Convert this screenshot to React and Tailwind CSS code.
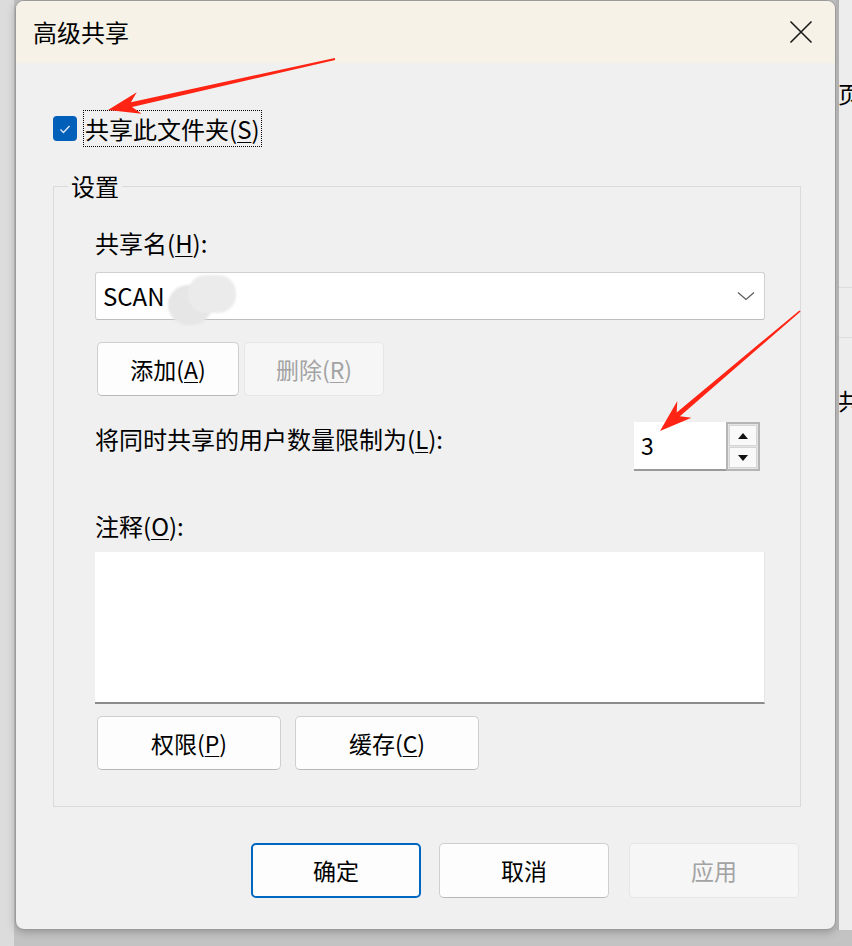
import React from 'react';

const font = "font-['Noto_Sans_CJK_SC','Noto_Sans',sans-serif]";

const Mn = ({ children }) => <span className="underline underline-offset-[3px] decoration-1">{children}</span>;

const Btn = ({ children, w, disabled, primary, className = '' }) => (
  <button
    className={`${w} flex items-center justify-center rounded-[5px] text-[23px] leading-none ${
      primary
        ? 'border-2 border-[#0067c0] bg-[#fdfdfd] text-black'
        : disabled
        ? 'border border-[#e6e6e6] bg-[#f6f6f6] text-[#a3a3a3]'
        : 'border border-[#cfcfcf] border-b-[#b8b8b8] bg-[#fdfdfd] text-black'
    } ${className}`}
  >
    {children}
  </button>
);

const Arrows = () => (
  <svg className="absolute inset-0 pointer-events-none" width="852" height="946" viewBox="0 0 852 946">
    <polygon
      fill="#ff2414"
      points="334.8,58 130.9,102.3 136.8,92.3 108,110 141.6,113.7 132,107.1 335.2,60"
    />
    <polygon
      fill="#ff2414"
      points="799.4,310.4 676.7,412.5 677.3,400.9 660,431 691.5,417.7 679.9,416.3 800.6,311.6"
    />
  </svg>
);

export default function App() {
  return (
    <div className={`${font} relative w-[852px] h-[946px] overflow-hidden bg-[#c3c3c3] flex text-black`}>
      {/* left background strip */}
      <div className="w-[15px] h-full bg-[#dcdcdc] border-r border-[#c4c4c4]" />

      {/* dialog */}
      <div className="w-[821px] h-[930px] flex flex-col bg-[#f0f0f0] border border-[#9a9a9a] rounded-[9px] overflow-hidden shadow-[0_2px_8px_rgba(0,0,0,0.25)]">
        <div className="h-[62px] shrink-0 bg-[#f7f2e7] flex items-center justify-between pl-[17px] pr-[22px]">
          <span className="text-[24px] leading-none">高级共享</span>
          <svg width="24" height="24" viewBox="0 0 24 24">
            <path d="M1.5 1.5 L22.5 22.5 M22.5 1.5 L1.5 22.5" stroke="#1a1a1a" strokeWidth="1.6" fill="none" />
          </svg>
        </div>

        <div className="flex-1 flex flex-col">
          {/* share checkbox */}
          <div className="flex items-center pl-[37px] pt-[47px]">
            <div className="w-[24px] h-[25px] rounded-[4px] bg-[#005fb8] flex items-center justify-center">
              <svg width="16" height="16" viewBox="0 0 16 16">
                <path d="M3.5 8.5 L6.5 11.5 L12.5 5" stroke="#dce9f7" strokeWidth="1.4" fill="none" />
              </svg>
            </div>
            <div className="ml-[6px] h-[37px] px-[1px] flex items-center border border-dotted border-black text-[24px] leading-none">
              共享此文件夹(<Mn>S</Mn>)
            </div>
          </div>

          {/* settings group */}
          <div className="relative ml-[37px] mt-[39px] w-[748px] h-[621px] border border-[#dadada] pl-[41px] pr-[35px] flex flex-col">
            <span className="absolute left-[14px] top-[-16px] px-[3px] bg-[#f0f0f0] text-[24px] leading-[30px]">设置</span>

            <div className="mt-[41px] text-[24px] leading-[30px]">
              共享名(<Mn>H</Mn>):
            </div>
            <div className="relative mt-[14px] h-[48px] bg-white border border-[#d0d0d0] border-b-[#bdbdbd] rounded-[3px] flex items-center justify-between pl-[7px] pr-[9px]">
              <span className="text-[24px] leading-none">SCAN</span>
              <svg width="18" height="10" viewBox="0 0 18 10">
                <path d="M1 1.5 L9 8.5 L17 1.5" stroke="#5a5a5a" strokeWidth="1.2" fill="none" />
              </svg>
              <div className="absolute left-[72px] top-[12px] w-[44px] h-[40px] rounded-full bg-[#e6e6e6] blur-[1px]" />
              <div className="absolute left-[92px] top-[2px] w-[48px] h-[38px] rounded-[18px] bg-[#ebebeb] blur-[1px]" />
            </div>

            <div className="mt-[22px] flex">
              <Btn w="ml-[2px] w-[142px] h-[54px]">添加(<Mn>A</Mn>)</Btn>
              <Btn w="ml-[5px] w-[140px] h-[54px]" disabled>删除(<Mn>R</Mn>)</Btn>
            </div>

            <div className="mt-[26px] flex items-start justify-between">
              <span className="mt-[2px] text-[24px] leading-[30px]">
                将同时共享的用户数量限制为(<Mn>L</Mn>):
              </span>
              <div className="mr-[5px] flex h-[49px]">
                <div className="w-[92px] h-full bg-white border-b-2 border-[#9a9a9a] flex items-center pl-[7px] text-[23px] leading-none">
                  3
                </div>
                <div className="w-[34px] h-full border-2 border-[#b5b5b5] bg-[#e4e4e4] flex flex-col">
                  <div className="flex-1 m-[1px] mb-0 bg-[#f9f9f9] border border-[#d6d6d6] flex items-center justify-center">
                    <svg width="10" height="6" viewBox="0 0 10 6"><polygon points="5,0 10,6 0,6" fill="#111" /></svg>
                  </div>
                  <div className="flex-1 m-[1px] bg-[#f9f9f9] border border-[#d6d6d6] flex items-center justify-center">
                    <svg width="10" height="6" viewBox="0 0 10 6"><polygon points="0,0 10,0 5,6" fill="#111" /></svg>
                  </div>
                </div>
              </div>
            </div>

            <div className="mt-[40px] text-[24px] leading-[30px]">
              注释(<Mn>O</Mn>):
            </div>
            <div className="mt-[11px] h-[152px] bg-white border-b-2 border-[#8c8c8c] border-r border-r-[#e6e6e6]" />

            <div className="mt-[12px] flex">
              <Btn w="ml-[2px] w-[184px] h-[54px]">权限(<Mn>P</Mn>)</Btn>
              <Btn w="ml-[14px] w-[184px] h-[54px]">缓存(<Mn>C</Mn>)</Btn>
            </div>
          </div>

          {/* dialog buttons */}
          <div className="mt-[36px] flex justify-end pr-[36px]">
            <Btn w="w-[170px] h-[55px]" primary>确定</Btn>
            <Btn w="ml-[18px] w-[170px] h-[55px]">取消</Btn>
            <Btn w="ml-[20px] w-[170px] h-[55px]" disabled>应用</Btn>
          </div>
        </div>
      </div>

      {/* right background strip */}
      <div className="w-[16px] h-[930px] bg-[#ededed] border-l-[3px] border-[#b2b2b2] overflow-hidden flex flex-col">
        <span className="mt-[78px] ml-[-1px] text-[23px] leading-[30px] whitespace-nowrap">页</span>
        <div className="mt-[179px] h-px bg-[#dcdcdc]" />
        <div className="mt-[49px] h-px bg-[#dcdcdc]" />
        <span className="mt-[47px] ml-[-1px] text-[23px] leading-[30px] whitespace-nowrap">共</span>
      </div>

      <Arrows />
    </div>
  );
}
